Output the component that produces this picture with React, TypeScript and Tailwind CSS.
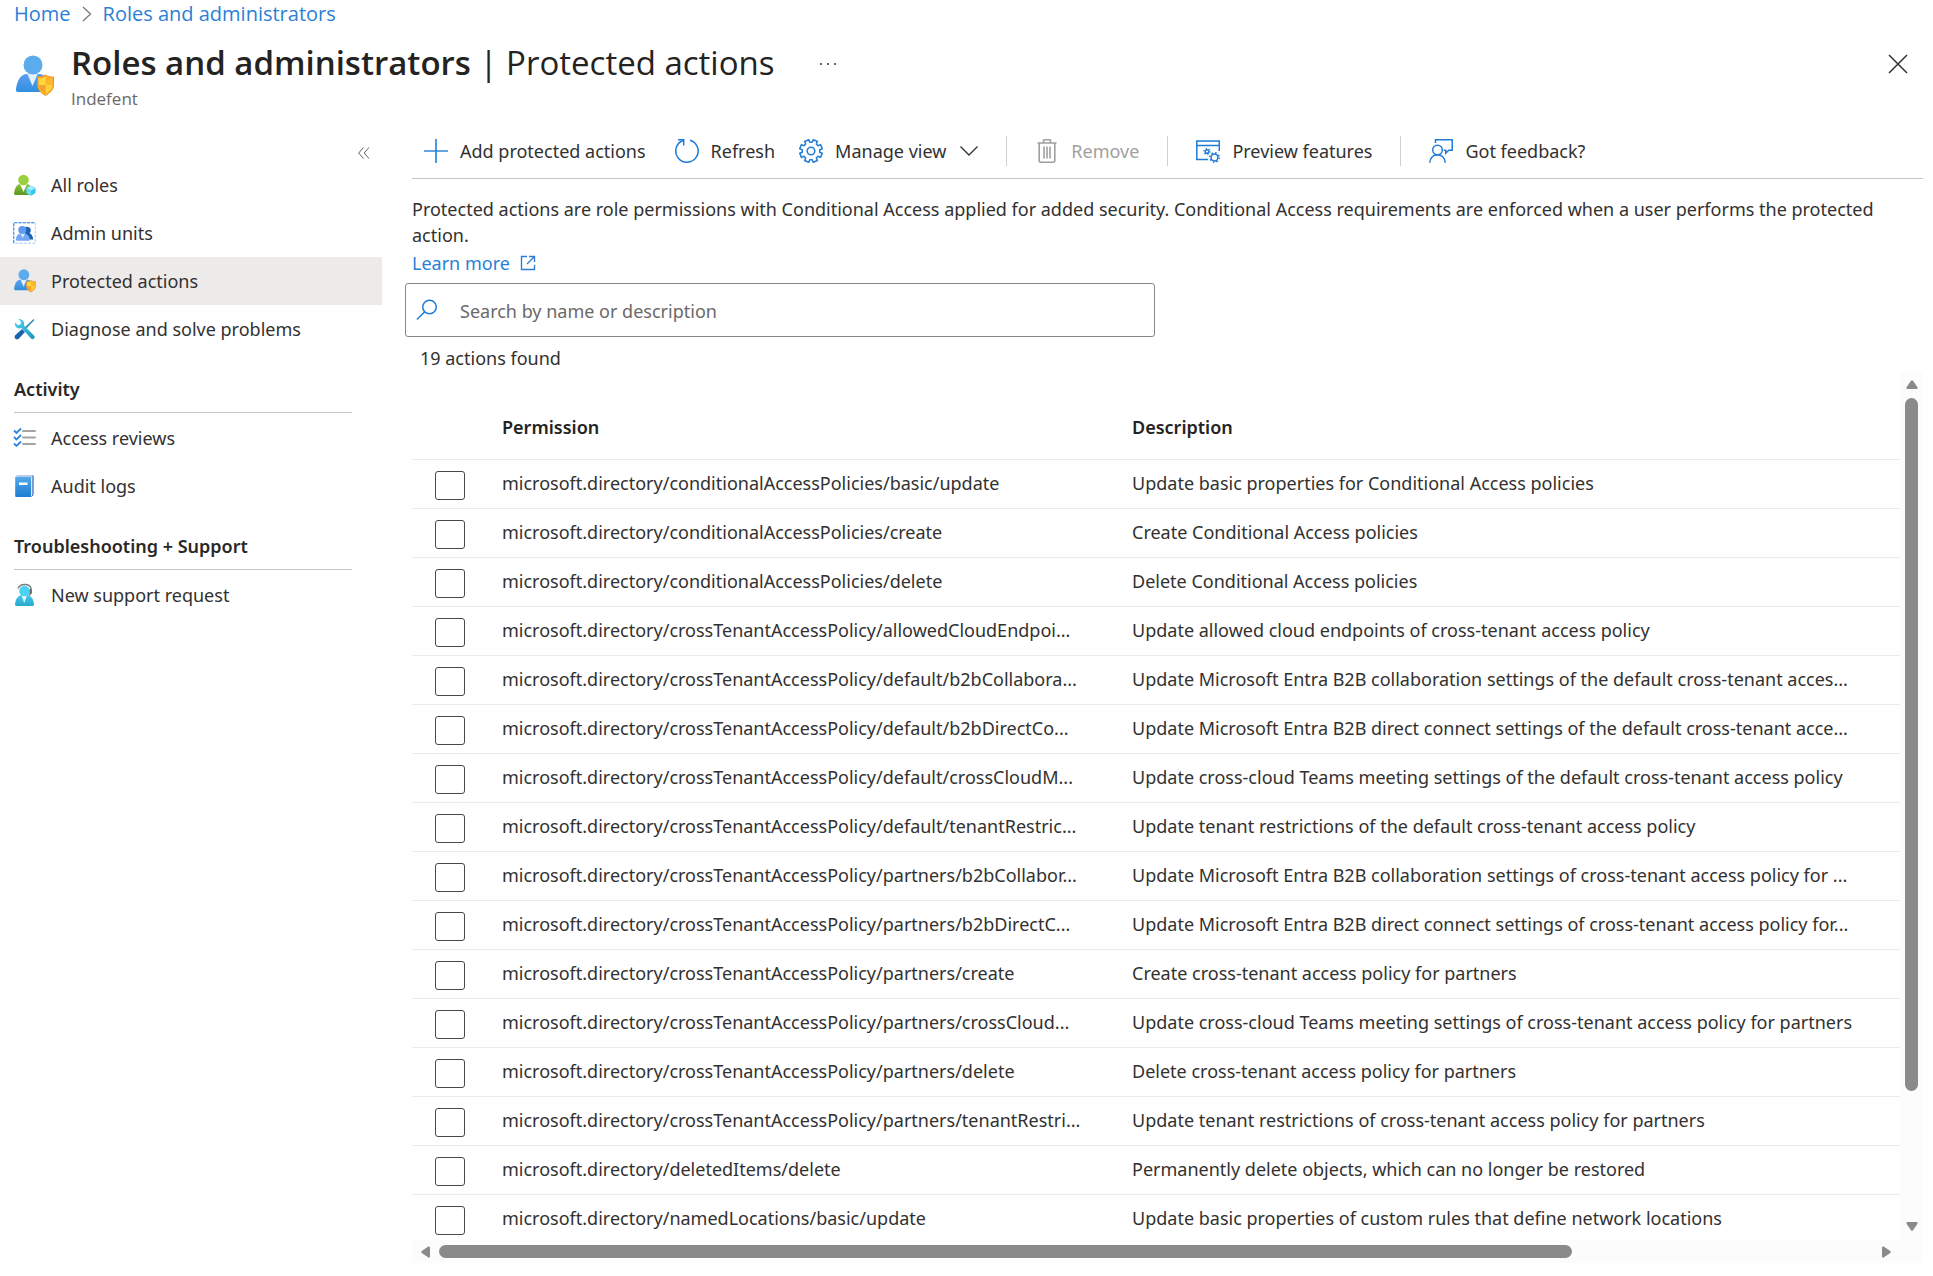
import React, { useState } from "react";

const permissions: [string, string][] = [
  ["microsoft.directory/conditionalAccessPolicies/basic/update", "Update basic properties for Conditional Access policies"],
  ["microsoft.directory/conditionalAccessPolicies/create", "Create Conditional Access policies"],
  ["microsoft.directory/conditionalAccessPolicies/delete", "Delete Conditional Access policies"],
  ["microsoft.directory/crossTenantAccessPolicy/allowedCloudEndpoi...", "Update allowed cloud endpoints of cross-tenant access policy"],
  ["microsoft.directory/crossTenantAccessPolicy/default/b2bCollabora...", "Update Microsoft Entra B2B collaboration settings of the default cross-tenant acces..."],
  ["microsoft.directory/crossTenantAccessPolicy/default/b2bDirectCo...", "Update Microsoft Entra B2B direct connect settings of the default cross-tenant acce..."],
  ["microsoft.directory/crossTenantAccessPolicy/default/crossCloudM...", "Update cross-cloud Teams meeting settings of the default cross-tenant access policy"],
  ["microsoft.directory/crossTenantAccessPolicy/default/tenantRestric...", "Update tenant restrictions of the default cross-tenant access policy"],
  ["microsoft.directory/crossTenantAccessPolicy/partners/b2bCollabor...", "Update Microsoft Entra B2B collaboration settings of cross-tenant access policy for ..."],
  ["microsoft.directory/crossTenantAccessPolicy/partners/b2bDirectC...", "Update Microsoft Entra B2B direct connect settings of cross-tenant access policy for..."],
  ["microsoft.directory/crossTenantAccessPolicy/partners/create", "Create cross-tenant access policy for partners"],
  ["microsoft.directory/crossTenantAccessPolicy/partners/crossCloud...", "Update cross-cloud Teams meeting settings of cross-tenant access policy for partners"],
  ["microsoft.directory/crossTenantAccessPolicy/partners/delete", "Delete cross-tenant access policy for partners"],
  ["microsoft.directory/crossTenantAccessPolicy/partners/tenantRestri...", "Update tenant restrictions of cross-tenant access policy for partners"],
  ["microsoft.directory/deletedItems/delete", "Permanently delete objects, which can no longer be restored"],
  ["microsoft.directory/namedLocations/basic/update", "Update basic properties of custom rules that define network locations"],
];

function ShieldUserIcon({ className }: { className: string }) {
  return (
    <svg viewBox="0 0 40 42" className={className} aria-hidden="true">
      <defs>
        <linearGradient id="userBlue" x1="0" y1="0" x2="0" y2="1">
          <stop offset="0" stopColor="#5ea0ef" />
          <stop offset="1" stopColor="#2f8fdf" />
        </linearGradient>
      </defs>
      <path d="M1 34c1-8 4-14 10-15h14c6 1 9 7 10 15 0 2-1 3-3 3H3c-2 0-2-1-2-3z" fill="url(#userBlue)" />
      <path d="M12 18h11l-5.500 13z" fill="#e4f1fc" />
      <circle cx="18" cy="10" r="9.500" fill="#5cabec" />
      <path d="M30.500 20c3 2 5 2 8 2v8c0 5-4 8-8 10.500-4-2.500-8-5.500-8-10.500v-8c3 0 5 0 8-2z" fill="#ffb52e" />
      <path d="M30.500 22v8h-6.500v-6.500c3 0 4.500-.5 6.500-1.500z" fill="#ffd93b" />
      <path d="M30.500 30H37c0 4-3 6.500-6.500 9z" fill="#ffd03a" />
      <path d="M30.500 30h-6.500c0 4 3 6.500 6.500 9z" fill="#f8a12c" />
      <path d="M30.500 20c3 2 5 2 8 2v8c0 5-4 8-8 10.500-4-2.500-8-5.500-8-10.500v-8c3 0 5 0 8-2z" fill="none" stroke="#e9901f" strokeWidth="1" />
    </svg>
  );
}

function AllRolesIcon() {
  return (
    <svg viewBox="0 0 24 24" className="size-6" aria-hidden="true">
      <defs>
        <linearGradient id="green" x1="0" y1="0" x2="0" y2="1">
          <stop offset="0" stopColor="#8ac63a" />
          <stop offset="1" stopColor="#5e9624" />
        </linearGradient>
      </defs>
      <path d="M1 21c.5-5 2-9 6-10h7c4 1 5.500 5 6 10l-1 1H2z" fill="url(#green)" />
      <path d="M7 11h7l-3.500 8z" fill="#fff" />
      <circle cx="10.500" cy="7" r="5.300" fill="#98d03f" />
      <path d="M18 12.500l4.500 2.500v5L18 22.800 13.500 20v-5z" fill="#32c8ea" />
      <path d="M18 12.500l4.500 2.500L18 17.700 13.500 15z" fill="#a4e9f8" />
      <path d="M13.500 15l4.500 2.700v5.100L13.500 20z" fill="#6bdcf4" />
    </svg>
  );
}

function AdminUnitsIcon() {
  return (
    <svg viewBox="0 0 24 24" className="size-6" aria-hidden="true">
      <rect x=".75" y="1.750" width="21.500" height="20.500" fill="#fff" stroke="#a9cdf0" strokeWidth="1" strokeDasharray="3 1.200" />
      <path d="M.75 22V1.750H22" fill="none" stroke="#2f86d8" strokeWidth="1" strokeDasharray="3 1.200" />
      <path d="M11 6.500c2-1.500 6.500-.8 6.800 2.500 0 1.500-.5 2.500-1.200 3.200 2.500 1 3.200 3.500 3.700 6.300H13z" fill="#1b62b6" />
      <circle cx="9.300" cy="9" r="4" fill="#6199ee" />
      <path d="M2.800 18.800c.3-3.500 1.700-5.500 4-6.300h5.500c2.500.8 4.200 3 4.700 6.300l-.8.900H3.600z" fill="#74a7f5" />
      <path d="M7.500 13h4.200l-2 4z" fill="#dceafd" />
    </svg>
  );
}

function ToolsIcon() {
  return (
    <svg viewBox="0 0 24 24" className="size-6" aria-hidden="true">
      <defs>
        <linearGradient id="wrench" x1="0" y1="0" x2="1" y2="1">
          <stop offset="0" stopColor="#4fd8f2" />
          <stop offset="1" stopColor="#1c93b9" />
        </linearGradient>
      </defs>
      <path d="M20.500 2l1 1-9.500 10-1.500-1.500z" fill="#3492b6" />
      <path d="M9 12l3 3-6.500 7c-2 1.500-5-1-3.500-3.500z" fill="#1a64ae" />
      <path d="M2 5.500l3 2.700 2.500-.7.500-2.500-2.500-3C9 1.500 12 4.500 11 8.500l10 10c2 2-1 5-3 3L8.500 11C5 12.500 1 10 2 5.500z" fill="url(#wrench)" />
    </svg>
  );
}

function ReviewsIcon() {
  return (
    <svg viewBox="0 0 24 24" className="size-6" fill="none" aria-hidden="true">
      <path d="M1 4.500L3.500 7 8 2.500M1 11l2.500 2.500L8 9M1 17.500L3.500 20 8 15.500" stroke="#2f86dc" strokeWidth="1.800" />
      <path d="M10 5h12M10 11.500h12M10 18h12" stroke="#a3a3a3" strokeWidth="2" strokeLinecap="round" />
    </svg>
  );
}

function AuditIcon() {
  return (
    <svg viewBox="0 0 24 24" className="size-6" aria-hidden="true">
      <defs>
        <linearGradient id="book" x1="0" y1="0" x2="0" y2="1">
          <stop offset="0" stopColor="#55a8ea" />
          <stop offset="1" stopColor="#1f7cd3" />
        </linearGradient>
      </defs>
      <path d="M4 1h16.500v20l-2 2V3H2.500z" fill="#b6cde6" />
      <path d="M20 1.500v19.500l-1.500 1.500" fill="none" stroke="#2b6cb4" strokeWidth="1" />
      <path d="M2.200 3H18v20H3.200a1 1 0 0 1-1-1z" fill="url(#book)" />
      <rect x="6" y="8.500" width="8.500" height="2.500" fill="#fff" />
    </svg>
  );
}

function SupportIcon() {
  return (
    <svg viewBox="0 0 24 24" className="size-6" aria-hidden="true">
      <defs>
        <linearGradient id="cyan" x1="0" y1="0" x2="0" y2="1">
          <stop offset="0" stopColor="#41c9ea" />
          <stop offset="1" stopColor="#28a9cf" />
        </linearGradient>
      </defs>
      <path d="M2 22c.3-6 3-9.500 7-10h5c4 .5 6.700 4 7 10l-1 1H3z" fill="url(#cyan)" />
      <path d="M8.500 12.500h5.500L11.200 20z" fill="#e6f8fd" />
      <circle cx="11.500" cy="8" r="5.300" fill="#4ad4f4" />
      <path d="M5 5.500C7 .5 16 0 18 5v5l-2 2.500" fill="none" stroke="#7a7a7a" strokeWidth="1.400" />
      <rect x="16.500" y="6" width="2.200" height="5" rx="1" fill="#666" />
    </svg>
  );
}

function PlusIcon() {
  return (
    <svg viewBox="0 0 24 24" className="size-6" aria-hidden="true">
      <path d="M12 0v24M0 12h24" stroke="#2f86dc" strokeWidth="1.700" />
    </svg>
  );
}

function RefreshIcon() {
  return (
    <svg viewBox="0 0 24 24" className="size-6" fill="none" stroke="#1f7bd8" strokeWidth="1.500" aria-hidden="true">
      <path d="M15 1.200A11.200 11.200 0 1 1 8 1.500" />
      <path d="M3 .8h5.700v5.700" />
    </svg>
  );
}

function gearPath(cx: number, cy: number, outer: number, inner: number, teeth: number) {
  const pts: string[] = [];
  for (let i = 0; i < teeth; i++) {
    const base = ((i + 0.5) / teeth) * Math.PI * 2 - Math.PI / 2;
    const step = Math.PI / teeth;
    const corners: [number, number][] = [
      [-0.65, inner],
      [-0.5, outer],
      [0.5, outer],
      [0.65, inner],
    ];
    corners.forEach(([a, r]) => {
      const t = base + a * step;
      pts.push(`${(cx + Math.cos(t) * r).toFixed(2)} ${(cy + Math.sin(t) * r).toFixed(2)}`);
    });
  }
  return `M${pts.join("L")}Z`;
}

function GearIcon() {
  return (
    <svg viewBox="0 0 24 24" className="size-6" fill="none" stroke="#1f7bd8" strokeWidth="1.500" strokeLinejoin="round" aria-hidden="true">
      <path d={gearPath(12, 12, 11.5, 8.8, 8)} />
      <circle cx="12" cy="12" r="3.800" />
    </svg>
  );
}

function TrashIcon() {
  return (
    <svg viewBox="0 0 24 24" className="size-6" fill="none" stroke="#a19f9d" strokeWidth="1.600" aria-hidden="true">
      <path d="M2.500 4h19M8.500 4V1.700c0-.6.4-1 1-1h5c.6 0 1 .4 1 1V4M4.200 4v17.500c0 1 .7 1.800 1.800 1.800h12c1 0 1.800-.8 1.800-1.800V4M9 7.500v12M12 7.500v12M15 7.500v12" />
    </svg>
  );
}

function PreviewIcon() {
  return (
    <svg viewBox="0 0 24 24" className="size-6" fill="none" stroke="#1f7bd8" strokeWidth="1.500" aria-hidden="true">
      <path d="M12 20.500H.8V2h22.500v10M.8 6.500h22.500" />
      <circle cx="11" cy="12.500" r="1.800" />
      <circle cx="11" cy="12.500" r="3" strokeDasharray="1.100 2.040" />
      <circle cx="18.500" cy="18.500" r="3.400" />
      <circle cx="18.500" cy="18.500" r="4.700" strokeDasharray="1.600 2.090" />
    </svg>
  );
}

function FeedbackIcon() {
  return (
    <svg viewBox="0 0 24 24" className="size-6" fill="none" stroke="#1f7bd8" strokeWidth="1.500" aria-hidden="true">
      <path d="M6.500 4V.8h16.700v10.500h-3.500l-3 3v-3h-2" />
      <circle cx="8.500" cy="11" r="4.800" />
      <path d="M.8 23.800c0-5 3.500-8 7.700-8s7.700 3 7.700 8" />
    </svg>
  );
}

function NavItem({ icon, label, active }: { icon: React.ReactNode; label: string; active?: boolean }) {
  return (
    <a
      href="#"
      aria-current={active ? "page" : undefined}
      className={active ? "flex h-12 items-center gap-3.5 bg-[#edebe9] pl-[13px]" : "flex h-12 items-center gap-3.5 pl-[13px]"}
    >
      {icon}
      {label}
    </a>
  );
}

function NavHeading({ children }: { children: React.ReactNode }) {
  return (
    <h2 className="mt-3 mr-[30px] mb-px ml-3.5 flex h-12 items-center border-b border-[#c8c6c4] font-semibold text-[#292827]">
      {children}
    </h2>
  );
}

function Divider() {
  return <span className="h-[30px] w-px bg-[#d2d0ce]" />;
}

export default function App() {
  const [query, setQuery] = useState("");
  return (
    <div className="flex h-screen flex-col overflow-hidden bg-white font-['Noto_Sans',sans-serif] text-[18px] leading-[26px] text-[#323130]">
      <nav
        aria-label="Breadcrumb"
        className="flex h-7 shrink-0 items-center gap-[11px] pl-3.5 font-['Open_Sans',sans-serif] text-[20px] text-[#2b7fd6]"
      >
        <a href="#">Home</a>
        <svg viewBox="0 0 10 16" className="h-4 w-2.5" fill="none" stroke="#767472" strokeWidth="1.200" aria-hidden="true">
          <path d="M1 1l7.500 7L1 15" />
        </svg>
        <a href="#">Roles and administrators</a>
      </nav>

      <header className="flex h-[95px] shrink-0 items-start pl-[15px] font-['Open_Sans',sans-serif]">
        <ShieldUserIcon className="mt-[27px] h-[42px] w-10" />
        <div className="ml-4 pt-[11px]">
          <h1 className="text-[33px] leading-[48px] whitespace-nowrap text-[#242322]">
            <span className="font-semibold">Roles and administrators</span> | Protected actions
          </h1>
          <p className="mt-0.5 text-[17px] leading-5 text-[#6b6967]">Indefent</p>
        </div>
        <button type="button" aria-label="More options" className="mt-7 ml-11 flex h-4 items-center">
          <svg viewBox="0 0 18 4" className="h-1 w-[18px]" fill="#444" aria-hidden="true">
            <circle cx="2" cy="2" r="1.100" />
            <circle cx="9" cy="2" r="1.100" />
            <circle cx="16" cy="2" r="1.100" />
          </svg>
        </button>
        <button type="button" aria-label="Close" className="mt-[26px] mr-[25px] ml-auto">
          <svg viewBox="0 0 20 20" className="size-5" stroke="#323130" strokeWidth="1.500" aria-hidden="true">
            <path d="M1 1l18 18M19 1L1 19" />
          </svg>
        </button>
      </header>

      <div className="flex min-h-0 flex-1">
        <aside className="w-[382px] shrink-0">
          <div className="flex h-[38px] justify-end pt-6 pr-3">
            <button type="button" aria-label="Collapse menu" className="size-3">
              <svg viewBox="0 0 12 12" className="size-3" fill="none" stroke="#605e5c" aria-hidden="true">
                <path d="M5.500 .5L.7 6l4.800 5.500M11 .5L6.200 6l4.800 5.500" />
              </svg>
            </button>
          </div>
          <NavItem icon={<AllRolesIcon />} label="All roles" />
          <NavItem icon={<AdminUnitsIcon />} label="Admin units" />
          <NavItem icon={<ShieldUserIcon className="size-6" />} label="Protected actions" active />
          <NavItem icon={<ToolsIcon />} label="Diagnose and solve problems" />
          <NavHeading>Activity</NavHeading>
          <NavItem icon={<ReviewsIcon />} label="Access reviews" />
          <NavItem icon={<AuditIcon />} label="Audit logs" />
          <NavHeading>Troubleshooting + Support</NavHeading>
          <NavItem icon={<SupportIcon />} label="New support request" />
        </aside>

        <main className="mr-2.5 ml-[30px] flex min-w-0 flex-1 flex-col">
          <div role="toolbar" className="flex h-14 shrink-0 items-center border-b border-[#c8c6c4] pl-3 whitespace-nowrap">
            <button type="button" className="flex items-center gap-3">
              <PlusIcon />
              Add protected actions
            </button>
            <button type="button" className="ml-[29px] flex items-center gap-3">
              <RefreshIcon />
              Refresh
            </button>
            <button type="button" className="ml-6 flex items-center gap-3">
              <GearIcon />
              Manage view
              <svg viewBox="0 0 18 10" className="ml-0.5 h-2.5 w-[18px]" fill="none" stroke="#323130" strokeWidth="1.300" aria-hidden="true">
                <path d="M.5 .5L9 9 17.500 .5" />
              </svg>
            </button>
            <span className="w-7" />
            <Divider />
            <button type="button" disabled className="mx-7 flex items-center gap-3 text-[#a19f9d]">
              <TrashIcon />
              Remove
            </button>
            <Divider />
            <button type="button" className="mx-7 flex items-center gap-3">
              <PreviewIcon />
              Preview features
            </button>
            <Divider />
            <button type="button" className="ml-7 flex items-center gap-3">
              <FeedbackIcon />
              Got feedback?
            </button>
          </div>

          <p className="mt-[17px]">
            Protected actions are role permissions with Conditional Access applied for added security. Conditional Access requirements are
            enforced when a user performs the protected action.
          </p>
          <a href="#" className="mt-0.5 flex items-center gap-2.5 self-start text-[#2b7fd6]">
            Learn more
            <svg viewBox="0 0 16 16" className="size-4" fill="none" stroke="#2b7fd6" strokeWidth="1.400" aria-hidden="true">
              <path d="M7 1.500H1.500v13h13V10M9 1.500h5.500V7M14.500 1.500L7 9" />
            </svg>
          </a>

          <label className="mt-[7px] -ml-[7px] flex h-[54px] w-[750px] shrink-0 items-center gap-[22px] rounded-[3px] border border-[#8a8886] pl-2.5">
            <svg viewBox="0 0 22 22" className="size-[22px]" fill="none" stroke="#1f7bd8" strokeWidth="1.500" aria-hidden="true">
              <circle cx="13.500" cy="8" r="6.800" />
              <path d="M8.700 12.800L1 20.500" />
            </svg>
            <input
              type="text"
              aria-label="Search by name or description"
              placeholder="Search by name or description"
              value={query}
              onChange={(e) => setQuery(e.target.value)}
              className="min-w-0 flex-1 pt-0.5 outline-none placeholder:text-[#6b6967]"
            />
          </label>
          <p className="mt-[9px] ml-2 leading-[25px]">19 actions found</p>

          <div className="mb-[13px] grid min-h-0 flex-1 grid-cols-[minmax(0,1fr)_23px] grid-rows-[minmax(0,1fr)_23px]">
            <div className="overflow-hidden">
              <table className="w-full table-fixed border-collapse text-left whitespace-nowrap">
                <thead>
                  <tr className="h-[88px] border-b border-[#edebe9] text-[#242322]">
                    <th className="w-[90px]" />
                    <th className="w-[630px] pt-6 font-semibold">Permission</th>
                    <th className="pt-6 font-semibold">Description</th>
                  </tr>
                </thead>
                <tbody>
                  {permissions.map(([name, description]) => (
                    <tr key={name} className="h-[49px] border-b border-[#edebe9]">
                      <td className="pt-1 pl-[23px]">
                        <input
                          type="checkbox"
                          aria-label={name}
                          className="block h-[29px] w-[30px] appearance-none rounded-[3px] border border-[#4a4846] bg-white checked:bg-[#2b7fd6]"
                        />
                      </td>
                      <td className="pb-0.5">{name}</td>
                      <td className="pb-0.5">{description}</td>
                    </tr>
                  ))}
                </tbody>
              </table>
            </div>
            <div className="flex flex-col items-center bg-[#fcfcfc] py-[9px]">
              <svg viewBox="0 0 12 9" className="h-[9px] w-3 shrink-0" fill="#8a8a8a" aria-hidden="true">
                <path d="M5 .8q1-1.200 2 0l4.500 6.500Q12 9 10.500 9h-9Q0 9 .5 7.300z" />
              </svg>
              <div className="mt-[9px] flex w-[13px] flex-1 flex-col pb-[9px]">
                <div className="h-[85%] rounded-full bg-[#8a8a8a]" />
              </div>
              <svg viewBox="0 0 12 9" className="h-[9px] w-3 shrink-0 rotate-180" fill="#8a8a8a" aria-hidden="true">
                <path d="M5 .8q1-1.200 2 0l4.500 6.500Q12 9 10.500 9h-9Q0 9 .5 7.300z" />
              </svg>
            </div>
            <div className="flex items-center bg-[#fcfcfc] px-[9px]">
              <svg viewBox="0 0 9 12" className="h-3 w-[9px] shrink-0" fill="#8a8a8a" aria-hidden="true">
                <path d="M.8 5q-1.200 1 0 2l6.500 4.500Q9 12 9 10.500v-9Q9 0 7.300 .5z" />
              </svg>
              <div className="ml-[9px] h-[13px] flex-1 pr-[9px]">
                <div className="h-full w-[79%] rounded-full bg-[#8a8a8a]" />
              </div>
              <svg viewBox="0 0 9 12" className="h-3 w-[9px] shrink-0 rotate-180" fill="#8a8a8a" aria-hidden="true">
                <path d="M.8 5q-1.200 1 0 2l6.500 4.500Q9 12 9 10.500v-9Q9 0 7.300 .5z" />
              </svg>
            </div>
            <div className="bg-[#fcfcfc]" />
          </div>
        </main>
      </div>
    </div>
  );
}
